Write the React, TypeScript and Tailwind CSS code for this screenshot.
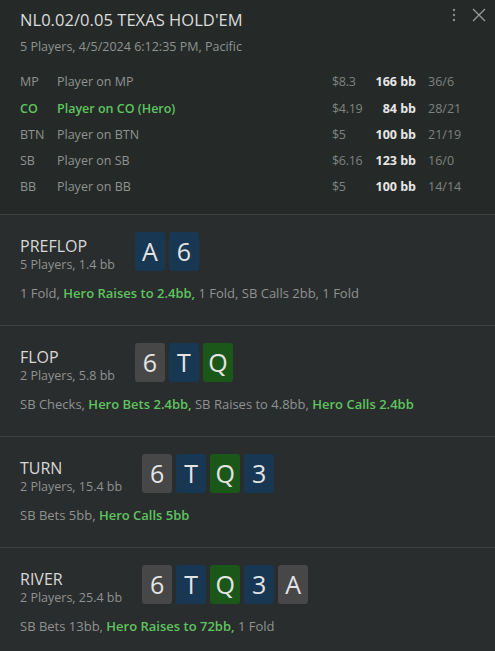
const players = [
  { pos: "MP", name: "Player on MP", cash: "$8.3", bb: "166 bb", stats: "36/6" },
  { pos: "CO", name: "Player on CO (Hero)", cash: "$4.19", bb: "84 bb", stats: "28/21", hero: true },
  { pos: "BTN", name: "Player on BTN", cash: "$5", bb: "100 bb", stats: "21/19" },
  { pos: "SB", name: "Player on SB", cash: "$6.16", bb: "123 bb", stats: "16/0" },
  { pos: "BB", name: "Player on BB", cash: "$5", bb: "100 bb", stats: "14/14" },
];

type Card = { r: string; c: "blue" | "grey" | "green" };

const cardColor = {
  blue: "bg-[#173753]",
  grey: "bg-[#474747]",
  green: "bg-[#1a5719]",
};

const streets: {
  name: string;
  info: string;
  cards: Card[];
  actions: { t: string; hero?: boolean }[];
}[] = [
  {
    name: "PREFLOP",
    info: "5 Players, 1.4 bb",
    cards: [
      { r: "A", c: "blue" },
      { r: "6", c: "blue" },
    ],
    actions: [
      { t: "1 Fold, " },
      { t: "Hero Raises to 2.4bb,", hero: true },
      { t: " 1 Fold, SB Calls 2bb, 1 Fold" },
    ],
  },
  {
    name: "FLOP",
    info: "2 Players, 5.8 bb",
    cards: [
      { r: "6", c: "grey" },
      { r: "T", c: "blue" },
      { r: "Q", c: "green" },
    ],
    actions: [
      { t: "SB Checks, " },
      { t: "Hero Bets 2.4bb,", hero: true },
      { t: " SB Raises to 4.8bb, " },
      { t: "Hero Calls 2.4bb", hero: true },
    ],
  },
  {
    name: "TURN",
    info: "2 Players, 15.4 bb",
    cards: [
      { r: "6", c: "grey" },
      { r: "T", c: "blue" },
      { r: "Q", c: "green" },
      { r: "3", c: "blue" },
    ],
    actions: [{ t: "SB Bets 5bb, " }, { t: "Hero Calls 5bb", hero: true }],
  },
  {
    name: "RIVER",
    info: "2 Players, 25.4 bb",
    cards: [
      { r: "6", c: "grey" },
      { r: "T", c: "blue" },
      { r: "Q", c: "green" },
      { r: "3", c: "blue" },
      { r: "A", c: "grey" },
    ],
    actions: [
      { t: "SB Bets 13bb, " },
      { t: "Hero Raises to 72bb,", hero: true },
      { t: " 1 Fold" },
    ],
  },
];

const App = () => {
  return (
    <div className="w-[495px] h-[651px] overflow-hidden bg-[#2a2d2d] font-['Open_Sans',sans-serif] text-[#d6d6d6]">
      <div className="bg-[#252a28] px-5 pt-[7px] pb-[13px] border-b border-[#3d4140]">
        <div className="flex items-start justify-between">
          <h1 className="text-[16.5px] tracking-[0.05px] text-[#dcdcdc] mt-[1px]">
            NL0.02/0.05 TEXAS HOLD'EM
          </h1>
          <div className="flex items-center gap-[16px] -mr-[11px] mt-[1px]">
            <svg width="4" height="14" viewBox="0 0 4 14" fill="#8a8d8c">
              <circle cx="2" cy="2" r="1.2" />
              <circle cx="2" cy="7" r="1.2" />
              <circle cx="2" cy="12" r="1.2" />
            </svg>
            <svg width="14" height="14" viewBox="0 0 14 14" stroke="#9a9c9b" strokeWidth="1.3">
              <path d="M1 1 L13 13 M13 1 L1 13" />
            </svg>
          </div>
        </div>
        <div className="text-[12.5px] text-[#8f9291] mt-[5px]">
          5 Players, 4/5/2024 6:12:35 PM, Pacific
        </div>
        <div className="mt-[13px] flex flex-col">
          {players.map((p) => (
            <div key={p.pos} className="flex items-center h-[26.3px] text-[12.5px]">
              <span
                className={`w-[37px] ${p.hero ? "text-[#5fc45f] font-semibold" : "text-[#8f9291]"}`}
              >
                {p.pos}
              </span>
              <span
                className={`flex-1 ${p.hero ? "text-[#5fc45f] font-semibold" : "text-[#8f9291]"}`}
              >
                {p.name}
              </span>
              <span className="w-[36px] text-[#7f8281] tracking-[-0.3px]">{p.cash}</span>
              <span className="w-[48px] text-right font-bold text-[#e6e6e6]">{p.bb}</span>
              <span className="w-[47px] ml-3 text-[#7f8281]">{p.stats}</span>
            </div>
          ))}
        </div>
      </div>
      {streets.map((s) => (
        <div key={s.name} className="px-5 pt-[17px] h-[111px] border-b border-[#3d4140]">
          <div className="flex items-start">
            <div className="mt-[4px]">
              <div className="text-[16px] leading-[20px] text-[#d8d8d8]">{s.name}</div>
              <div className="text-[12.5px] leading-[18px] text-[#8f9291]">{s.info}</div>
            </div>
            <div className="flex gap-[4px] ml-5">
              {s.cards.map((c, i) => (
                <div
                  key={i}
                  className={`w-[30px] h-[39px] rounded-[3px] flex items-center justify-center text-[25px] text-[#e4e4e4] ${cardColor[c.c]}`}
                >
                  {c.r}
                </div>
              ))}
            </div>
          </div>
          <div className="mt-[10px] text-[13px] text-[#8f9291]">
            {s.actions.map((a, i) => (
              <span key={i} className={a.hero ? "text-[#5fc45f] font-semibold" : ""}>
                {a.t}
              </span>
            ))}
          </div>
        </div>
      ))}
    </div>
  );
};

export default App;
